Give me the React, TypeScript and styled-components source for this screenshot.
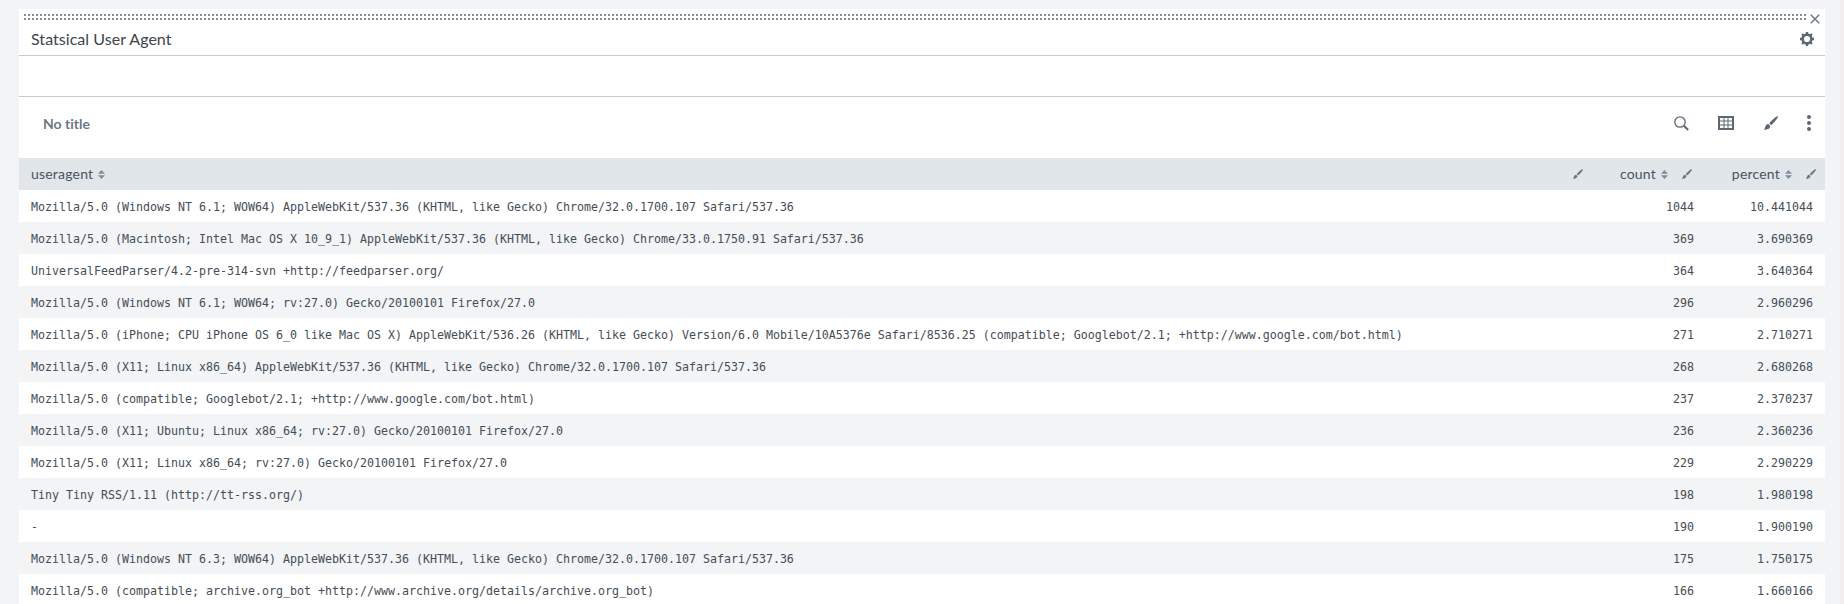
import React from 'react';
import styled, { createGlobalStyle } from 'styled-components';

const Global = createGlobalStyle`
  * { box-sizing: border-box; }
  html, body { margin: 0; height: 604px; overflow: hidden; background: #f2f4f5; }
  body {
    font-family: Lato, "Liberation Sans", sans-serif;
    font-variant-ligatures: none;
    color: #3c444d;
  }
`;

const Page = styled.main`
  height: 604px;
  padding: 9px 15px 0 19px;
  border-right: 4px solid #f2eff0;
  background: #f2f4f5;
  overflow: hidden;
`;

const Panel = styled.section`
  background: #fff;
`;

const DragBar = styled.div`
  display: flex;
  height: 16px;
  padding: 5px 5px 0;
`;

const DragDots = styled.div`
  flex: 1;
  height: 6px;
  margin-right: 3px;
  background: conic-gradient(from 270deg at 2px 2px, #818d99 90deg, transparent 0) 0 0 / 4px 4px;
`;

const PanelHeader = styled.header`
  display: flex;
  align-items: center;
  justify-content: space-between;
  height: 31px;
  padding: 0 11px 2px 12px;
  border-bottom: 1px solid #c3cbd4;
`;

const PanelTitle = styled.h2`
  margin: 0;
  font-size: 16px;
  font-weight: 400;
  letter-spacing: 0.04px;
  line-height: 20px;
  white-space: nowrap;
`;

const InputRow = styled.div`
  height: 41px;
  border-bottom: 1px solid #c3cbd4;
`;

const Toolbar = styled.div`
  display: flex;
  align-items: center;
  height: 61px;
  padding: 0 14px 9px 24px;
`;

const ElementTitle = styled.h3`
  flex: 1;
  margin: 0;
  padding-top: 2px;
  font-size: 14px;
  font-weight: 700;
  line-height: 18px;
  color: #6b7785;
`;

const Tools = styled.div`
  display: flex;
  align-items: center;
  color: #5c6773;
  gap: 29px;
`;

const Row = styled.div<{ $shade?: boolean }>`
  display: grid;
  grid-template-columns: 1fr 109px 124px;
  height: 32px;
  align-items: center;
  background: ${(p) => (p.$shade ? '#f2f4f5' : '#fff')};
`;

const HeadRow = styled(Row)`
  background: #e1e6eb;
`;

const HeadCell = styled.div<{ $end?: boolean }>`
  display: flex;
  align-items: center;
  justify-content: ${(p) => (p.$end ? 'flex-end' : 'flex-start')};
  padding: 0 9px 0 12px;
  color: #6b7785;
`;

const HeadLabel = styled.span`
  font-size: 14px;
  letter-spacing: 0.2px;
  line-height: 20px;
  color: #4a535e;
  margin-right: 5px;
`;

const BrushSlot = styled.span<{ $push?: boolean }>`
  display: flex;
  margin-left: ${(p) => (p.$push ? 'auto' : '14px')};
`;

const Cell = styled.div<{ $right?: number }>`
  font-family: "DejaVu Sans Mono", monospace;
  font-size: 11.635px;
  line-height: 20px;
  white-space: pre;
  color: #454d57;
  padding: 2px ${(p) => p.$right ?? 0}px 0 ${(p) => (p.$right ? 0 : 12)}px;
  text-align: ${(p) => (p.$right ? 'right' : 'left')};
`;

const Brush = ({ size }: { size: number }) => (
  <svg width={size} height={size} viewBox="0 0 14 14" fill="currentColor">
    <path d="M14 0 L13.5 2 Q11.2 5.6 7.2 9.2 L5.2 7.3 Q8.6 3.2 12 .7Z" />
    <path d="M4.3 8 L6.3 9.9 C6.1 11.6 5 12.9 3.2 13.2 L0 13.9 C.8 13 .8 12.1 1.3 10.6 C1.8 9.1 2.9 8.2 4.3 8Z" />
  </svg>
);

const Sort = () => (
  <svg width="7" height="9" viewBox="0 0 7 9" fill="#818d99">
    <path d="M0 3.8 3.5 0 7 3.8zM0 5.2h7L3.5 9z" />
  </svg>
);

const Close = () => (
  <svg width="10" height="10" viewBox="0 0 10 10" stroke="#6b7785" strokeWidth="1.5">
    <path d="M.8.8l8.4 8.4M9.2.8.8 9.2" />
  </svg>
);

const Gear = () => (
  <svg width="14" height="14" viewBox="-7 -7 14 14" fill="none" stroke="#5c6773">
    <circle r="4.4" strokeWidth="2.6" />
    {[0, 45, 90, 135, 180, 225, 270, 315].map((a) => (
      <path key={a} d="M0-5V-7" strokeWidth="2.3" transform={`rotate(${a})`} />
    ))}
  </svg>
);

const Search = () => (
  <svg width="15" height="15" viewBox="0 0 15 15" fill="none" stroke="currentColor">
    <circle cx="6" cy="6" r="5.2" strokeWidth="1.3" />
    <path d="M9.8 9.8 14.2 14" strokeWidth="2" />
  </svg>
);

const Grid = () => (
  <svg width="17" height="14" viewBox="0 0 17 14" fill="none" stroke="currentColor">
    <path d="M1 1h14v12H1z" strokeWidth="2" />
    <path d="M2 5h12M2 9h12M6 2v10M10 2v10" strokeWidth="1" />
  </svg>
);

const Dots = () => (
  <svg width="4" height="16" viewBox="0 0 4 16" fill="currentColor">
    <circle cx="2" cy="2" r="2" />
    <circle cx="2" cy="8" r="2" />
    <circle cx="2" cy="14" r="2" />
  </svg>
);

const rows: [string, string, string][] = [
  ['Mozilla/5.0 (Windows NT 6.1; WOW64) AppleWebKit/537.36 (KHTML, like Gecko) Chrome/32.0.1700.107 Safari/537.36', '1044', '10.441044'],
  ['Mozilla/5.0 (Macintosh; Intel Mac OS X 10_9_1) AppleWebKit/537.36 (KHTML, like Gecko) Chrome/33.0.1750.91 Safari/537.36', '369', '3.690369'],
  ['UniversalFeedParser/4.2-pre-314-svn +http://feedparser.org/', '364', '3.640364'],
  ['Mozilla/5.0 (Windows NT 6.1; WOW64; rv:27.0) Gecko/20100101 Firefox/27.0', '296', '2.960296'],
  ['Mozilla/5.0 (iPhone; CPU iPhone OS 6_0 like Mac OS X) AppleWebKit/536.26 (KHTML, like Gecko) Version/6.0 Mobile/10A5376e Safari/8536.25 (compatible; Googlebot/2.1; +http://www.google.com/bot.html)', '271', '2.710271'],
  ['Mozilla/5.0 (X11; Linux x86_64) AppleWebKit/537.36 (KHTML, like Gecko) Chrome/32.0.1700.107 Safari/537.36', '268', '2.680268'],
  ['Mozilla/5.0 (compatible; Googlebot/2.1; +http://www.google.com/bot.html)', '237', '2.370237'],
  ['Mozilla/5.0 (X11; Ubuntu; Linux x86_64; rv:27.0) Gecko/20100101 Firefox/27.0', '236', '2.360236'],
  ['Mozilla/5.0 (X11; Linux x86_64; rv:27.0) Gecko/20100101 Firefox/27.0', '229', '2.290229'],
  ['Tiny Tiny RSS/1.11 (http://tt-rss.org/)', '198', '1.980198'],
  ['-', '190', '1.900190'],
  ['Mozilla/5.0 (Windows NT 6.3; WOW64) AppleWebKit/537.36 (KHTML, like Gecko) Chrome/32.0.1700.107 Safari/537.36', '175', '1.750175'],
  ['Mozilla/5.0 (compatible; archive.org_bot +http://www.archive.org/details/archive.org_bot)', '166', '1.660166'],
];

export default function App() {
  return (
    <Page>
      <Global />
      <Panel>
        <DragBar>
          <DragDots />
          <Close />
        </DragBar>
        <PanelHeader>
          <PanelTitle>Statsical User Agent</PanelTitle>
          <Gear />
        </PanelHeader>
        <InputRow />
        <Toolbar>
          <ElementTitle>No title</ElementTitle>
          <Tools>
            <Search />
            <Grid />
            <Brush size={14} />
            <Dots />
          </Tools>
        </Toolbar>
        <HeadRow>
          <HeadCell>
            <HeadLabel>useragent</HeadLabel>
            <Sort />
            <BrushSlot $push><Brush size={10} /></BrushSlot>
          </HeadCell>
          <HeadCell $end>
            <HeadLabel>count</HeadLabel>
            <Sort />
            <BrushSlot><Brush size={10} /></BrushSlot>
          </HeadCell>
          <HeadCell $end>
            <HeadLabel>percent</HeadLabel>
            <Sort />
            <BrushSlot><Brush size={10} /></BrushSlot>
          </HeadCell>
        </HeadRow>
        {rows.map(([agent, count, percent], i) => (
          <Row key={agent} $shade={i % 2 === 1}>
            <Cell>{agent}</Cell>
            <Cell $right={7}>{count}</Cell>
            <Cell $right={12}>{percent}</Cell>
          </Row>
        ))}
      </Panel>
    </Page>
  );
}
